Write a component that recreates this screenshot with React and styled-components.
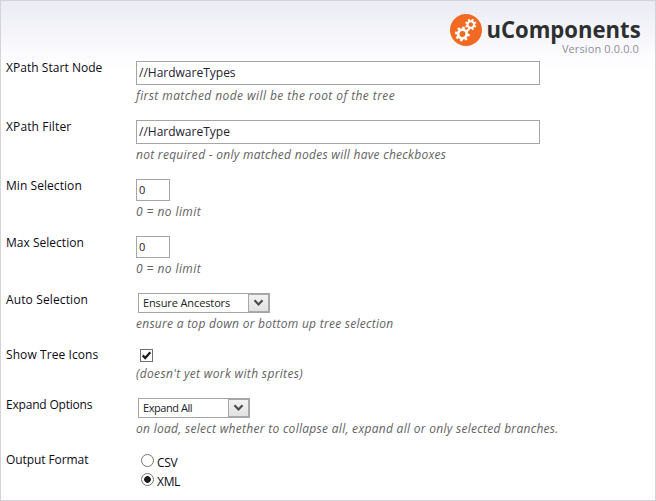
import React from 'react';
import styled, { createGlobalStyle } from 'styled-components';

const Global = createGlobalStyle`
  * { box-sizing: border-box; }
  body { margin: 0; background: #fff; }
`;

const Panel = styled.main`
  width: 656px;
  height: 501px;
  overflow: hidden;
  border: 1px solid #d5d3d6;
  background: linear-gradient(#ebebf5 0, #f3f3f9 26px, #fcfcfe 55px, #fff 72px);
  font: 12px/16px "Open Sans", "Noto Sans", sans-serif;
  color: #0c0a14;
`;

const Header = styled.header`
  height: 60px;
  padding: 13px 15px 0 0;
  display: flex;
  justify-content: flex-end;
  gap: 5px;
`;

const Logo = styled.svg`
  width: 32px;
  height: 32px;
  flex: none;
`;

const Brand = styled.div`
  width: 153px;
  display: flex;
  flex-direction: column;
  align-items: flex-end;
`;

const Wordmark = styled.h1`
  margin: 4px -1px 0 0;
  font-size: 24px;
  line-height: 22px;
  font-weight: 700;
  color: #2d2f31;
  white-space: nowrap;
  transform: scaleX(0.92);
  transform-origin: right;
`;

const Version = styled.span`
  margin: 1px 1px 0 0;
  font-size: 11px;
  line-height: 16px;
  letter-spacing: 0.12px;
  color: #8f8f96;
`;

const Form = styled.form`
  display: flex;
  flex-direction: column;
`;

const Row = styled.div`
  height: ${(p) => p.$height}px;
  padding-left: 5px;
  display: grid;
  grid-template-columns: 130px 1fr;
`;

const Label = styled.label`
  margin-top: -1px;
  letter-spacing: ${(p) => p.$track || 0}px;
`;

const Slot = styled.div`
  height: ${(p) => p.$height - 32}px;
  display: flex;
  align-items: flex-start;
`;

const Help = styled.p`
  margin: 0;
  font-style: italic;
  color: #626262;
  white-space: nowrap;
  letter-spacing: ${(p) => p.$track}px;
`;

const TextInput = styled.input`
  width: ${(p) => (p.$short ? 34 : 404)}px;
  height: ${(p) => (p.$short ? 22 : 24)}px;
  padding: 0 1px 1px 2px;
  border: 1px solid #a5a5a5;
  border-radius: 0;
  outline: none;
  background: #fff;
  color: #242230;
  font: ${(p) => (p.$short ? 11 : 12)}px "Open Sans", sans-serif;
`;

const Select = styled.button`
  width: ${(p) => p.$width}px;
  height: 20px;
  margin-left: 2px;
  padding: 0 0 0 4px;
  border: 1px solid #a5a5a5;
  display: flex;
  justify-content: space-between;
  align-items: stretch;
  background: #fff;
  color: #222;
  font: 11px/18px "Open Sans", sans-serif;
  letter-spacing: ${(p) => p.$track}px;
`;

const Arrow = styled.span`
  width: 21px;
  border: 1px solid #a9a9ab;
  display: flex;
  align-items: center;
  justify-content: center;
  background: linear-gradient(#f2f2f2, #e2e2e4);
`;

const Check = styled.span`
  width: 13px;
  height: 13px;
  margin: 1px 0 0 4px;
  border: 1px solid #707070;
  display: flex;
  background: #fff;
`;

const RadioGroup = styled.div`
  padding: 1px 0 0 5px;
  display: flex;
  flex-direction: column;
  gap: 3px;
`;

const RadioOption = styled.label`
  height: 16px;
  display: flex;
  align-items: flex-start;
  gap: 3px;
  font-size: 12px;
  line-height: 18px;
  letter-spacing: -0.3px;
`;

const RadioDot = styled.span`
  width: 13px;
  height: 13px;
  border: 1px solid #737373;
  border-radius: 50%;
  background: ${(p) => (p.$on ? 'radial-gradient(circle, #1c1c1c 3px, #fff 3.7px)' : '#fff')};
`;

const TEETH = [0, 45, 90, 135, 180, 225, 270, 315];

function Gear({ x, y, r, turn }) {
  return (
    <g transform={`translate(${x} ${y}) rotate(${turn})`}>
      <circle r={r * 0.58} fill="none" stroke="#fff" strokeWidth={r * 0.36} />
      {TEETH.map((a) => (
        <rect key={a} x={-r * 0.17} y={-r} width={r * 0.34} height={r * 0.38} fill="#fff" transform={`rotate(${a})`} />
      ))}
    </g>
  );
}

function Dropdown({ width, track, children }) {
  return (
    <Select type="button" $width={width} $track={track}>
      {children}
      <Arrow>
        <svg width="11" height="8" viewBox="0 0 11 8">
          <path d="M1.5 1.2 5.5 5.4 9.5 1.2" fill="none" stroke="#4b4b4b" strokeWidth="2.2" />
        </svg>
      </Arrow>
    </Select>
  );
}

function Field({ label, labelTrack, height, help, helpTrack, children }) {
  return (
    <Row $height={height}>
      <Label $track={labelTrack}>{label}</Label>
      <div>
        <Slot $height={height}>{children}</Slot>
        <Help $track={helpTrack}>{help}</Help>
      </div>
    </Row>
  );
}

export default function App() {
  return (
    <Panel>
      <Global />
      <Header>
        <Logo viewBox="0 0 32 32">
          <circle cx="16" cy="16" r="16" fill="#f26a21" />
          <Gear x={12.4} y={20} r={7.4} turn={10} />
          <Gear x={20.8} y={10.5} r={5.7} turn={22} />
        </Logo>
        <Brand>
          <Wordmark>uComponents</Wordmark>
          <Version>Version 0.0.0.0</Version>
        </Brand>
      </Header>
      <Form>
        <Field label="XPath Start Node" labelTrack={0.04} height={59} help="first matched node will be the root of the tree" helpTrack={0.42}>
          <TextInput defaultValue="//HardwareTypes" />
        </Field>
        <Field label="XPath Filter" labelTrack={0.13} height={59} help="not required - only matched nodes will have checkboxes" helpTrack={0.28}>
          <TextInput defaultValue="//HardwareType" />
        </Field>
        <Field label="Min Selection" labelTrack={0.06} height={57} help="0 = no limit" helpTrack={0.42}>
          <TextInput $short defaultValue="0" />
        </Field>
        <Field label="Max Selection" labelTrack={0.02} height={57} help="0 = no limit" helpTrack={0.42}>
          <TextInput $short defaultValue="0" />
        </Field>
        <Field label="Auto Selection" labelTrack={0.13} height={55} help="ensure a top down or bottom up tree selection" helpTrack={0.27}>
          <Dropdown width={132} track={-0.12}>Ensure Ancestors</Dropdown>
        </Field>
        <Field label="Show Tree Icons" labelTrack={0.08} height={50} help="(doesn't yet work with sprites)" helpTrack={0.34}>
          <Check role="checkbox" aria-checked="true">
            <svg width="11" height="11" viewBox="0 0 11 11">
              <path d="M1.7 5.4 4.2 8 9.3 2.3" fill="none" stroke="#1c1c1c" strokeWidth="2.3" />
            </svg>
          </Check>
        </Field>
        <Field label="Expand Options" labelTrack={-0.2} height={55} help="on load, select whether to collapse all, expand all or only selected branches." helpTrack={0.29}>
          <Dropdown width={112} track={-0.45}>Expand All</Dropdown>
        </Field>
        <Row $height={46}>
          <Label $track={-0.08}>Output Format</Label>
          <RadioGroup>
            <RadioOption><RadioDot />CSV</RadioOption>
            <RadioOption><RadioDot $on />XML</RadioOption>
          </RadioGroup>
        </Row>
      </Form>
    </Panel>
  );
}
